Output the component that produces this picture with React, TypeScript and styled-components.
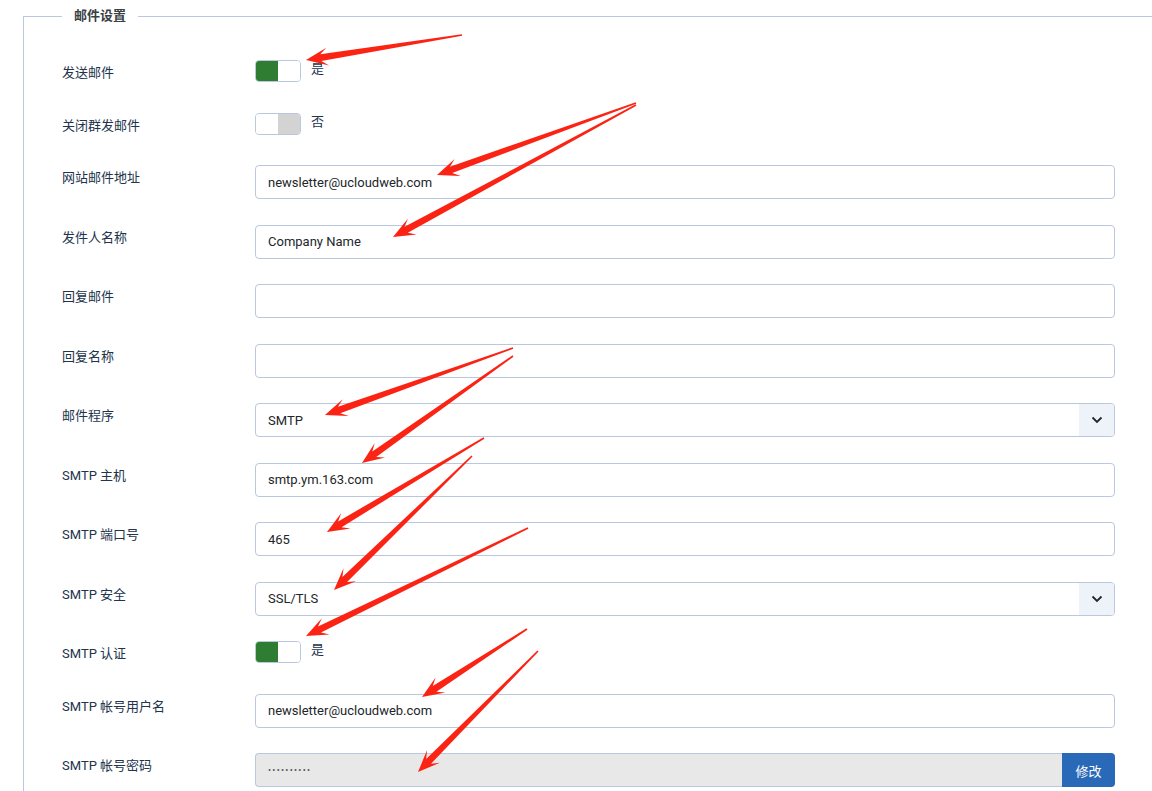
import styled, { createGlobalStyle } from "styled-components";

const colors = {
  border: "#b9c8de",
  label: "#22334b",
  text: "#22262a",
  green: "#2e7d32",
  offGray: "#d3d3d3",
  blue: "#2a69b8",
  readonly: "#e8e8e8",
  chevronBg: "#eef3fa",
  arrow: "#fb2414",
};

const GlobalStyle = createGlobalStyle`
  html, body {
    margin: 0;
    padding: 0;
    background: #ffffff;
    overflow: hidden;
  }
  body {
    font-family: Roboto, "Noto Sans CJK SC", sans-serif;
    font-size: 13px;
    color: ${colors.text};
  }
`;

const Page = styled.div`
  width: 1152px;
  height: 791px;
  overflow: hidden;
  position: relative;
`;

const Fieldset = styled.fieldset`
  margin: 6px -60px 0 23px;
  padding: 34px 0 0 38px;
  border: 1px solid ${colors.border};
  min-height: 900px;
`;

const Legend = styled.legend`
  padding: 0 12px;
  line-height: 20px;
  font-size: 13px;
  font-weight: 700;
  color: #3a3f44;
`;

const Row = styled.div<{ $switch?: boolean }>`
  display: grid;
  grid-template-columns: 193px 860px;
  align-items: start;
  height: ${(p) => (p.$switch ? "27px" : "34px")};
  margin-bottom: 25.5px;
`;

const Label = styled.label`
  padding-top: 3px;
  line-height: 20px;
  font-size: 13px;
  color: ${colors.label};
`;

const SwitchWrap = styled.div`
  display: flex;
  align-items: flex-start;
  gap: 10px;
  height: 22px;
`;

const SwitchText = styled.span`
  line-height: 18px;
  font-size: 13px;
  color: ${colors.label};
`;

const SwitchBox = styled.div`
  display: flex;
  width: 46px;
  height: 22px;
  box-sizing: border-box;
  border: 1px solid ${colors.border};
  border-radius: 4px;
  overflow: hidden;
`;

const SwitchHalf = styled.span<{ $fill?: string }>`
  flex: 1;
  background: ${(p) => p.$fill || "#ffffff"};
`;

const TextInput = styled.div`
  height: 34px;
  box-sizing: border-box;
  border: 1px solid ${colors.border};
  border-radius: 4px;
  padding: 0 12px;
  display: flex;
  align-items: center;
  font-size: 13px;
  color: ${colors.text};
  background: #ffffff;
`;

const SelectBox = styled.div`
  height: 34px;
  box-sizing: border-box;
  border: 1px solid ${colors.border};
  border-radius: 4px;
  display: flex;
  overflow: hidden;
  font-size: 13px;
  color: ${colors.text};
`;

const SelectValue = styled.div`
  flex: 1;
  padding: 0 12px;
  display: flex;
  align-items: center;
`;

const ChevronBox = styled.div`
  width: 35px;
  background: ${colors.chevronBg};
  display: flex;
  align-items: center;
  justify-content: center;
`;

const InputGroup = styled.div`
  height: 34px;
  display: flex;
`;

const ReadonlyField = styled.div`
  flex: 1;
  box-sizing: border-box;
  border: 1px solid ${colors.border};
  border-right: none;
  border-radius: 4px 0 0 4px;
  background: ${colors.readonly};
  padding: 0 12px;
  display: flex;
  align-items: center;
  font-size: 9px;
  letter-spacing: 1.3px;
  color: #555;
`;

const ModifyButton = styled.button`
  width: 53px;
  border: none;
  border-radius: 0 4px 4px 0;
  background: ${colors.blue};
  color: #ffffff;
  font-family: Roboto, "Noto Sans CJK SC", sans-serif;
  font-size: 13px;
  padding: 0;
`;

const Overlay = styled.svg`
  position: absolute;
  top: 0;
  left: 0;
  pointer-events: none;
`;

const Chevron = () => (
  <svg width="12" height="8" viewBox="0 0 12 8">
    <path d="M1.5 1.5 L6 6 L10.5 1.5" fill="none" stroke="#22262a" strokeWidth="1.8" />
  </svg>
);

const Switch = ({ on }: { on: boolean }) => (
  <SwitchWrap>
    <SwitchBox>
      <SwitchHalf $fill={on ? colors.green : undefined} />
      <SwitchHalf $fill={on ? undefined : colors.offGray} />
    </SwitchBox>
    <SwitchText>{on ? "是" : "否"}</SwitchText>
  </SwitchWrap>
);

type Arrow = [number, number, number, number];

const arrows: Arrow[] = [
  [462, 35, 306, 60],
  [636, 103, 437, 175],
  [636, 105, 393, 237],
  [513, 348, 325, 415],
  [513, 356, 362, 463],
  [484, 438, 327, 532],
  [472, 456, 334, 590],
  [528, 528, 306, 636],
  [527, 629, 422, 697],
  [538, 651, 418, 772],
];

const arrowPoints = ([sx, sy, tx, ty]: Arrow) => {
  const len = Math.hypot(tx - sx, ty - sy);
  const ux = (tx - sx) / len;
  const uy = (ty - sy) / len;
  const nx = -uy;
  const ny = ux;
  const at = (d: number, w: number) => `${tx - ux * d + nx * w},${ty - uy * d + ny * w}`;
  return [
    `${sx + nx * 0.8},${sy + ny * 0.8}`,
    at(15, 3.4),
    at(22, 9),
    `${tx},${ty}`,
    at(22, -9),
    at(15, -3.4),
    `${sx - nx * 0.8},${sy - ny * 0.8}`,
  ].join(" ");
};

const App = () => {
  return (
    <Page>
      <GlobalStyle />
      <Fieldset>
        <Legend>邮件设置</Legend>
        <Row $switch>
          <Label>发送邮件</Label>
          <Switch on />
        </Row>
        <Row $switch>
          <Label>关闭群发邮件</Label>
          <Switch on={false} />
        </Row>
        <Row>
          <Label>网站邮件地址</Label>
          <TextInput>newsletter@ucloudweb.com</TextInput>
        </Row>
        <Row>
          <Label>发件人名称</Label>
          <TextInput>Company Name</TextInput>
        </Row>
        <Row>
          <Label>回复邮件</Label>
          <TextInput />
        </Row>
        <Row>
          <Label>回复名称</Label>
          <TextInput />
        </Row>
        <Row>
          <Label>邮件程序</Label>
          <SelectBox>
            <SelectValue>SMTP</SelectValue>
            <ChevronBox>
              <Chevron />
            </ChevronBox>
          </SelectBox>
        </Row>
        <Row>
          <Label>SMTP 主机</Label>
          <TextInput>smtp.ym.163.com</TextInput>
        </Row>
        <Row>
          <Label>SMTP 端口号</Label>
          <TextInput>465</TextInput>
        </Row>
        <Row>
          <Label>SMTP 安全</Label>
          <SelectBox>
            <SelectValue>SSL/TLS</SelectValue>
            <ChevronBox>
              <Chevron />
            </ChevronBox>
          </SelectBox>
        </Row>
        <Row $switch>
          <Label>SMTP 认证</Label>
          <Switch on />
        </Row>
        <Row>
          <Label>SMTP 帐号用户名</Label>
          <TextInput>newsletter@ucloudweb.com</TextInput>
        </Row>
        <Row>
          <Label>SMTP 帐号密码</Label>
          <InputGroup>
            <ReadonlyField>••••••••••</ReadonlyField>
            <ModifyButton>修改</ModifyButton>
          </InputGroup>
        </Row>
      </Fieldset>
      <Overlay width="1152" height="791" viewBox="0 0 1152 791">
        {arrows.map((a, i) => (
          <polygon key={i} points={arrowPoints(a)} fill={colors.arrow} />
        ))}
      </Overlay>
    </Page>
  );
};

export default App;
